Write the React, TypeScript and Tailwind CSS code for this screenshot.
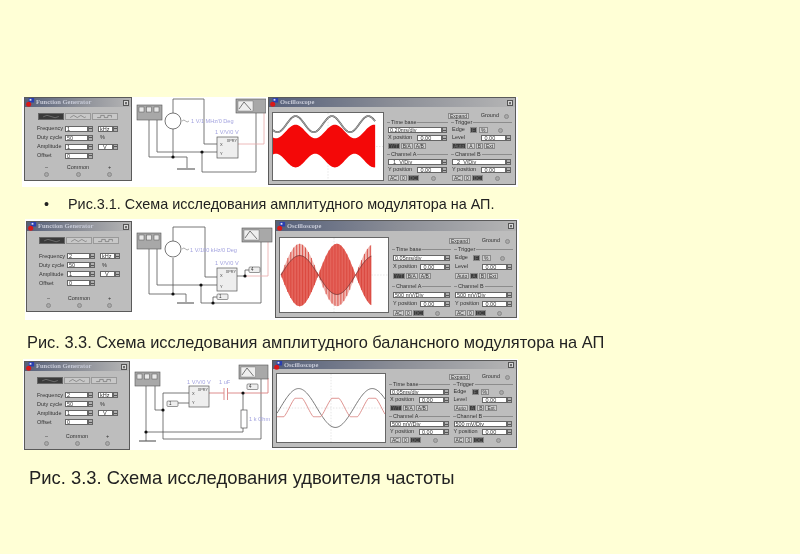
import type { ReactNode } from "react";

const range = (from: number, to: number, step = 1) => {
  const out: number[] = [];
  for (let x = from; x <= to; x += step) out.push(x);
  return out;
};

const line = (xs: number[], f: (x: number) => number) =>
  xs.map((x, i) => `${i === 0 ? "M" : "L"}${x} ${f(x).toFixed(2)}`).join(" ");

const band = (xs: number[], top: (x: number) => number, bottom: (x: number) => number) =>
  line(xs, top) + " " + [...xs].reverse().map((x) => `L${x} ${bottom(x).toFixed(2)}`).join(" ") + " Z";

function AppIcon() {
  return (
    <svg viewBox="0 0 10 10" className="w-[9px] h-[9px] shrink-0">
      <rect x="3" y="0" width="6" height="5" fill="#2a3fb0" />
      <rect x="4" y="1" width="2" height="2" fill="#dde" />
      <circle cx="3" cy="7" r="2.8" fill="#d81818" />
    </svg>
  );
}

function TitleBar({ title, className }: { title: string; className: string }) {
  return (
    <div className={`flex items-center gap-[1px] bg-gradient-to-r from-[#56607a] via-[#8a8d96] to-[#b5b5b5] pl-[1px] pr-[2px] ${className}`}>
      <AppIcon />
      <span className="flex-1 text-[6.5px] font-bold leading-none text-[#c6c9d6] font-['Liberation_Serif',serif]">{title}</span>
      <span className="w-[6px] h-[6px] bg-[#d8d8d8] border border-[#555] text-[5px] leading-[4px] text-center text-black">×</span>
    </div>
  );
}

function Spin() {
  return (
    <div className="flex flex-col w-[5px] h-full shrink-0 border border-[#666] bg-[#b0b0b0]">
      <div className="flex-1 border-b border-[#555]" />
      <div className="flex-1" />
    </div>
  );
}

function Knob() {
  return <span className="inline-block w-[5px] h-[5px] rounded-full bg-[#a8a8a8] border border-[#8a8a8a] shrink-0" />;
}

function Field({ value, className }: { value: string; className: string }) {
  return (
    <div className={`flex h-[6px] shrink-0 ${className}`}>
      <div className="flex-1 bg-white border border-[#666] text-[5.5px] leading-[4px] pl-[1px] text-[#333] overflow-hidden whitespace-pre">{value}</div>
      <Spin />
    </div>
  );
}

function Btn({ label, dark, className = "" }: { label: string; dark?: boolean; className?: string }) {
  return (
    <span className={`h-[6px] px-[1px] text-[5px] leading-[5px] text-center border border-[#8a8a8a] ${dark ? "bg-[#3c3c3c] text-[#777]" : "bg-[#cfcfcf] text-[#333]"} ${className}`}>
      {label}
    </span>
  );
}

function FuncGen({ className, rows }: { className: string; rows: string[] }) {
  const labels = ["Frequency", "Duty cycle", "Amplitude", "Offset"];
  return (
    <div className={`flex flex-col shrink-0 bg-[#bdbdbd] border border-[#5a5a5a] ${className}`}>
      <TitleBar title="Function Generator" className="h-[9px]" />
      <div className="flex-1 flex flex-col justify-between px-[4px] pt-[6px] pb-[3px] text-[5.5px] leading-none text-[#333]">
        <div className="flex justify-center gap-[1px]">
          <svg viewBox="0 0 26 7" className="w-[26px] h-[7px] bg-[#3a3a3a] border border-[#666]">
            <path d="M2 4 Q7 0 13 3.5 T24 3.5" stroke="#999" strokeWidth=".7" fill="none" />
          </svg>
          <svg viewBox="0 0 26 7" className="w-[26px] h-[7px] bg-[#c8c8c8] border border-[#999]">
            <path d="M2 5 L7 2 L12 5 L17 2 L22 5 L24 4" stroke="#555" strokeWidth=".7" fill="none" />
          </svg>
          <svg viewBox="0 0 26 7" className="w-[26px] h-[7px] bg-[#c8c8c8] border border-[#999]">
            <path d="M2 5 H7 V2 H12 V5 H17 V2 H22 V5" stroke="#555" strokeWidth=".7" fill="none" />
          </svg>
        </div>
        <div className="flex flex-col gap-[3px] pl-[8px]">
          {labels.map((label, i) => (
            <div key={label} className="flex items-center h-[6px]">
              <span className="w-[28px] whitespace-nowrap">{label}</span>
              <Field value={rows[i]} className="w-[28px] mr-[5px]" />
              {i === 0 && <Field value="kHz" className="w-[20px]" />}
              {i === 1 && <span className="pl-[2px]">%</span>}
              {i === 2 && <Field value="  V" className="w-[20px]" />}
            </div>
          ))}
        </div>
        <div className="flex justify-between px-[15px]">
          {["–", "Common", "+"].map((label) => (
            <div key={label} className="flex flex-col items-center gap-[2px]">
              <span className="whitespace-nowrap">{label}</span>
              <Knob />
            </div>
          ))}
        </div>
      </div>
    </div>
  );
}

function Legend({ title, className, children }: { title: string; className: string; children: ReactNode }) {
  return (
    <div className={`flex flex-col border-t border-[#8c8c8c] px-[1px] ${className}`}>
      <span className="-mt-[3px] ml-[2px] w-fit bg-[#bdbdbd] px-[1px] text-[5.5px] leading-[5px]">{title}</span>
      {children}
    </div>
  );
}

type ScopeProps = {
  className: string;
  screenClass: string;
  titleClass: string;
  bodyClass: string;
  headClass: string;
  groupClass: string;
  innerClass: string;
  time: string;
  a: string;
  b: string;
  autoDark?: boolean;
  children: ReactNode;
};

function Scope({ className, screenClass, titleClass, bodyClass, headClass, groupClass, innerClass, time, a, b, autoDark, children }: ScopeProps) {
  const channel = (title: string, value: string) => (
    <Legend title={title} className={innerClass}>
      <Field value={value} className="w-full" />
      <div className="flex items-center gap-[2px] h-[6px]">
        <span className="whitespace-nowrap flex-1">Y position</span>
        <Field value=" 0.00" className="w-[30px]" />
      </div>
      <div className="flex items-center gap-[1px]">
        <Btn label="AC" />
        <Btn label="0" />
        <Btn label="DC" dark />
        <span className="flex-1" />
        <Knob />
        <span className="flex-1" />
      </div>
    </Legend>
  );
  return (
    <div className={`flex flex-col shrink-0 bg-[#bdbdbd] border border-[#5a5a5a] ${className}`}>
      <TitleBar title="Oscilloscope" className={titleClass} />
      <div className={`flex-1 min-h-0 flex gap-[3px] px-[3px] pb-[2px] ${bodyClass}`}>
        <div className={`shrink-0 bg-white border border-[#666] ${screenClass}`}>{children}</div>
        <div className="flex-1 min-w-0 flex flex-col pt-[1px] text-[5.5px] leading-none text-[#333]">
          <div className={`flex items-center h-[6px] ${headClass}`}>
            <span className="flex-1" />
            <Btn label="Expand" className="w-[21px]" />
            <span className="w-[30px] text-right">Ground</span>
            <span className="w-[13px] flex justify-end pr-[3px]"><Knob /></span>
          </div>
          <div className="flex gap-[3px]">
            <div className={`flex-1 flex flex-col ${groupClass}`}>
              <Legend title="Time base" className={innerClass}>
                <Field value={time} className="w-full" />
                <div className="flex items-center gap-[2px] h-[6px]">
                  <span className="flex-1 whitespace-nowrap">X position</span>
                  <Field value=" 0.00" className="w-[30px]" />
                </div>
                <div className="flex gap-[1px]">
                  <Btn label="Y/T" dark />
                  <Btn label="B/A" />
                  <Btn label="A/B" />
                </div>
              </Legend>
              {channel("Channel A", a)}
            </div>
            <div className={`flex-1 flex flex-col ${groupClass}`}>
              <Legend title="Trigger" className={innerClass}>
                <div className="flex items-center gap-[2px] h-[6px]">
                  <span className="w-[16px]">Edge</span>
                  <Btn label="F" dark />
                  <Btn label="%" />
                  <span className="flex-1 flex justify-center"><Knob /></span>
                </div>
                <div className="flex items-center gap-[2px] h-[6px]">
                  <span className="flex-1">Level</span>
                  <Field value=" 0.00" className="w-[30px]" />
                </div>
                <div className="flex gap-[1px]">
                  <Btn label="Auto" dark={autoDark} />
                  <Btn label="A" dark={!autoDark} />
                  <Btn label="B" />
                  <Btn label="Ext" />
                </div>
              </Legend>
              {channel("Channel B", b)}
            </div>
          </div>
        </div>
      </div>
    </div>
  );
}

function Cross({ w, h }: { w: number; h: number }) {
  return (
    <g stroke="#d4d4d4" strokeWidth=".6" strokeDasharray="1.5 1.5" fill="none">
      <path d={`M0 ${h / 2} H${w}`} />
      <path d={`M${w / 2} 0 V${h}`} />
    </g>
  );
}

function AmTrace() {
  const xs = range(0, 104);
  const env = (x: number) => 15 + 7 * Math.cos((2 * Math.PI * (x - 23)) / 40);
  const gray = line(xs, (x) => 11.5 - 8.3 * Math.cos((2 * Math.PI * (x - 23)) / 37));
  return (
    <svg viewBox="0 0 112 69" preserveAspectRatio="none" className="w-full h-full">
      <Cross w={112} h={69} />
      <path d={band(xs, (x) => 34 - env(x), (x) => 34 + env(x))} fill="#f40808" />
      <path d={gray} stroke="#555" strokeWidth="1.8" fill="none" />
      <path d={gray} stroke="#eee" strokeWidth=".6" fill="none" />
    </svg>
  );
}

function DsbTrace() {
  const xs = range(1, 93, 0.5);
  const env = (x: number) => 32 * Math.abs(Math.sin((Math.PI * (x - 39)) / 38));
  const s = (x: number) => Math.sin((2 * Math.PI * (x - 39)) / 76);
  const top = (x: number) => (s(x) < 0 ? 38 + 20 * s(x) : 38 - env(x));
  const bottom = (x: number) => (s(x) < 0 ? 38 + env(x) : 38 + 20 * s(x));
  return (
    <svg viewBox="0 0 110 76" preserveAspectRatio="none" className="w-full h-full">
      <Cross w={110} h={76} />
      <path d={band(xs, (x) => 38 - env(x), (x) => 38 + env(x))} fill="#efb9b4" />
      <path d={band(xs, top, bottom)} fill="#e4635a" />
      {range(2, 93, 3).map((x) => (
        <line key={x} x1={x} x2={x} y1={38 - env(x)} y2={38 + env(x)} stroke="#d9453c" strokeWidth=".9" />
      ))}
      <path d={line(xs, (x) => 38 + 20 * s(x))} stroke="#6a3030" strokeWidth=".8" fill="none" />
    </svg>
  );
}

function DoublerTrace() {
  const xs = range(0, 110);
  return (
    <svg viewBox="0 0 110 70" preserveAspectRatio="none" className="w-full h-full">
      <Cross w={110} h={70} />
      <path d={line(xs, (x) => 35 - 20 * Math.cos((2 * Math.PI * (x - 22)) / 75))} stroke="#666" strokeWidth=".9" fill="none" />
      <path
        d={line(xs, (x) => {
          const c = Math.cos((2 * Math.PI * (x - 22)) / 37.5);
          return 34.5 - 9.5 * Math.max(-1, Math.min(1, 1.25 * c));
        })}
        stroke="#d9837f"
        strokeWidth=".9"
        fill="none"
      />
    </svg>
  );
}

const wire = "#555";
const pink = "#e9a8a8";
const lav = "#a3a3df";

function Instrument({ x, y, w, h }: { x: number; y: number; w: number; h: number }) {
  return (
    <g>
      <rect x={x} y={y} width={w} height={h} fill="#a8a8a8" stroke="#555" strokeWidth=".6" />
      {[2, 9.5, 17].map((d) => (
        <rect key={d} x={x + d} y={y + 2} width="5" height="5" fill="#e8e8e8" stroke="#555" strokeWidth=".5" />
      ))}
    </g>
  );
}

function ScopeIcon({ x, y, w, h }: { x: number; y: number; w: number; h: number }) {
  return (
    <g>
      <rect x={x} y={y} width={w} height={h} fill="#a8a8a8" stroke="#555" strokeWidth=".6" />
      <rect x={x + 2} y={y + 2} width={w * 0.5} height={h - 4} fill="#eee" stroke="#666" strokeWidth=".4" />
      <path d={`M${x + 3} ${y + h - 4} L${x + 8} ${y + 3} L${x + w * 0.5} ${y + h - 3}`} stroke="#444" strokeWidth=".7" fill="none" />
    </g>
  );
}

function Box({ x, y, w, h }: { x: number; y: number; w: number; h: number }) {
  return (
    <g>
      <rect x={x} y={y} width={w} height={h} fill="#eee" stroke="#555" strokeWidth=".7" />
      <text x={x + w - 1} y={y + 5} textAnchor="end" fontSize="3.8" fill="#444">XPRY</text>
      <text x={x + 3} y={y + 9} fontSize="4" fill="#444">X</text>
      <text x={x + 3} y={y + h - 3} fontSize="4" fill="#444">Y</text>
    </g>
  );
}

function Node({ x, y, label }: { x: number; y: number; label: string }) {
  return (
    <g>
      <rect x={x} y={y} width="11" height="5.5" rx="1" fill="#eee" stroke="#555" strokeWidth=".6" />
      <text x={x + 2} y={y + 4.4} fontSize="4.5" fill="#333">{label}</text>
    </g>
  );
}

function Label({ x, y, children }: { x: number; y: number; children: string }) {
  return <text x={x} y={y} fontSize="5.6" fill={lav}>{children}</text>;
}

function Source({ x, y }: { x: number; y: number }) {
  return (
    <g>
      <circle cx={x} cy={y} r="8" fill="#fff" stroke="#555" strokeWidth=".8" />
      <path d={`M${x + 9} ${y} q2 -2 3.5 0 t3.5 0`} stroke="#777" strokeWidth=".6" fill="none" />
    </g>
  );
}

function Dots({ at }: { at: [number, number][] }) {
  return <>{at.map(([x, y]) => <circle key={`${x}-${y}`} cx={x} cy={y} r="1.6" fill="#111" />)}</>;
}

function Circuit1() {
  return (
    <svg viewBox="134 97 132 90" className="w-[132px] h-[90px] shrink-0">
      <g stroke={wire} strokeWidth=".8" fill="none">
        <path d="M173 113V99H204V144H217" />
        <path d="M173 129V157" />
        <path d="M149 120V157H187V168" />
        <path d="M177 169H195" strokeWidth="1.1" />
        <path d="M157 120V152H217" />
        <path d="M202 152V172H256V113" />
      </g>
      <path d="M238 144H264V113" stroke={pink} strokeWidth=".8" fill="none" />
      <Instrument x={137} y={105} w={25} h={15} />
      <Source x={173} y={121} />
      <Box x={217} y={137} w={21} h={21} />
      <ScopeIcon x={236} y={99} w={30} h={14} />
      <Dots at={[[173, 157], [202, 152]]} />
      <Label x={191} y={123}>1 V/1 MHz/0 Deg</Label>
      <Label x={215} y={134}>1 V/V/0 V</Label>
    </svg>
  );
}

function Circuit2() {
  return (
    <svg viewBox="134 219 140 101" className="w-[140px] h-[101px] shrink-0">
      <g stroke={wire} strokeWidth=".8" fill="none">
        <path d="M173 241V227H205V277H217" />
        <path d="M173 258V294" />
        <path d="M149 249V294H186V302" />
        <path d="M177 303H194" strokeWidth="1.1" />
        <path d="M157 249V285H217" />
        <path d="M201 285V303H261V242" />
        <path d="M237 276H245V270H249" />
        <path d="M213 303V297H217" />
      </g>
      <path d="M245 276H268V242" stroke={pink} strokeWidth=".8" fill="none" />
      <Instrument x={137} y={233} w={24} h={16} />
      <Source x={173} y={249} />
      <Box x={217} y={268} w={20} h={23} />
      <ScopeIcon x={242} y={228} w={30} h={14} />
      <Node x={249} y={267} label="4" />
      <Node x={217} y={294} label="1" />
      <Dots at={[[173, 294], [201, 285], [213, 303], [245, 276]]} />
      <Label x={190} y={252}>1 V/100 kHz/0 Deg</Label>
      <Label x={215} y={265}>1 V/V/0 V</Label>
    </svg>
  );
}

function Circuit3() {
  return (
    <svg viewBox="131 359 140 91" className="w-[140px] h-[91px] shrink-0">
      <g stroke={wire} strokeWidth=".8" fill="none">
        <path d="M146 386V441" />
        <path d="M139 441H156" strokeWidth="1.1" />
        <path d="M155 386V410H163" />
        <path d="M189 393H163V439H261V378" />
        <path d="M177 403H189" />
        <path d="M146 432H243V428" />
        <path d="M243 393V410" />
      </g>
      <g stroke="#d98080" strokeWidth=".9" fill="none">
        <path d="M209 393H224M228 393H268V378" />
        <path d="M224 388V400M227.500 388V400" />
      </g>
      <Instrument x={135} y={372} w={25} h={14} />
      <Box x={189} y={386} w={20} h={21} />
      <ScopeIcon x={239} y={365} w={29} h={14} />
      <rect x={241} y={410} width="6" height="18" fill="#fff" stroke="#555" strokeWidth=".7" />
      <Node x={247} y={384} label="4" />
      <Node x={167} y={401} label="1" />
      <Dots at={[[163, 410], [146, 432], [243, 393]]} />
      <Label x={187} y={384}>1 V/V/0 V</Label>
      <Label x={219} y={384}>1 uF</Label>
      <Label x={249} y={421}>1 k Ohm</Label>
    </svg>
  );
}

export default function App() {
  return (
    <div className="w-[800px] h-[554px] overflow-hidden bg-[#ffffd6] font-['Liberation_Sans',sans-serif] text-[#222]">
      <div className="flex items-start ml-[22px] mt-[97px] w-[496px] h-[90px] bg-white pl-[2px] blur-[0.6px]">
        <FuncGen className="w-[108px] h-[84px]" rows={["1", "50", "1", "0"]} />
        <div className="ml-[2px]"><Circuit1 /></div>
        <Scope
          className="w-[248px] h-[88px] ml-[2px]"
          screenClass="w-[112px] h-[69px]"
          titleClass="h-[9px]"
          bodyClass="pt-[5px]"
          headClass="mb-[3px]"
          groupClass="gap-[5px]"
          innerClass="gap-[2px]"
          time="0.20ms/div"
          a="  1  V/Div"
          b="  2  V/Div"
          autoDark
        >
          <AmTrace />
        </Scope>
      </div>

      <div className="flex items-center h-[29px] mt-[3px] text-[14.4px] leading-none blur-[0.3px]">
        <span className="ml-[44px] w-[24px]">•</span>
        <span>Рис.3.1. Схема исследования амплитудного модулятора на АП.</span>
      </div>

      <div className="flex items-start ml-[25px] w-[494px] h-[101px] bg-white pl-[1px] pt-[1px] blur-[0.6px]">
        <div className="mt-[1px] flex"><FuncGen className="w-[106px] h-[91px]" rows={["2", "50", "1", "0"]} /></div>
        <div className="ml-[2px] -mt-[1px]"><Circuit2 /></div>
        <Scope
          className="w-[242px] h-[98px] ml-[1px]"
          screenClass="w-[110px] h-[76px]"
          titleClass="h-[10px]"
          bodyClass="pt-[6px]"
          headClass="mb-[5px]"
          groupClass="gap-[7px]"
          innerClass="gap-[3px]"
          time="0.05ms/div"
          a="500 mV/Div"
          b="500 mV/Div"
        >
          <DsbTrace />
        </Scope>
      </div>

      <div className="flex items-center h-[39px] pt-[6px] ml-[27px] text-[16.4px] leading-none blur-[0.3px]">
        Рис. 3.3. Схема исследования амплитудного балансного модулятора на АП
      </div>

      <div className="flex items-start ml-[23px] w-[495px] h-[91px] bg-white pl-[1px] pt-[1px] blur-[0.6px]">
        <div className="mt-[1px] flex"><FuncGen className="w-[106px] h-[89px]" rows={["2", "50", "1", "0"]} /></div>
        <div className="ml-[1px] -mt-[1px]"><Circuit3 /></div>
        <Scope
          className="w-[245px] h-[88px] ml-[1px]"
          screenClass="w-[110px] h-[70px]"
          titleClass="h-[8px]"
          bodyClass="pt-[4px]"
          headClass="mb-[4px]"
          groupClass="gap-[5px]"
          innerClass="gap-[2px]"
          time="0.05ms/div"
          a="500 mV/Div"
          b="500 mV/Div"
        >
          <DoublerTrace />
        </Scope>
      </div>

      <div className="flex items-center h-[56px] ml-[29px] text-[18.4px] leading-none blur-[0.3px]">
        Рис. 3.3. Схема исследования удвоителя частоты
      </div>
    </div>
  );
}
